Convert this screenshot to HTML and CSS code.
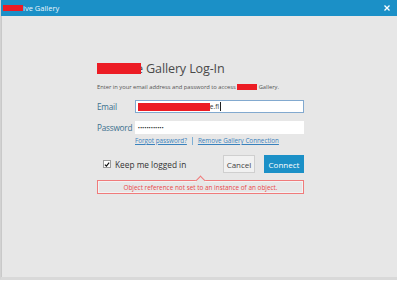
FILE: index.html
```html
<!DOCTYPE html>
<html>
<head>
<meta charset="utf-8">
<link rel="stylesheet" href="styles.css">
</head>
<body>
<div class="window">
  <div class="titlebar">
    <span class="redact title-redact"></span>
    <span class="title-text">ive Gallery</span>
    <svg class="close" width="6" height="6" viewBox="0 0 6 6"><path d="M0.5 0.5 L5.5 5.5 M5.5 0.5 L0.5 5.5" stroke="#fff" stroke-width="1.3"/></svg>
  </div>
  <div class="content">
    <div class="form">
      <h1 class="heading"><span class="redact head-redact"></span><span class="head-text">e Gallery Log-In</span></h1>
      <p class="intro">Enter in your email address and password to access <span class="redact intro-redact"></span> Gallery.</p>
      <div class="row">
        <label class="label">Email</label>
        <div class="input focused"><span class="redact email-redact"></span><span class="email-tail">e.fl</span><span class="caret"></span></div>
      </div>
      <div class="row">
        <label class="label">Password</label>
        <div class="input"><span class="dots">••••••••••••</span></div>
      </div>
      <div class="links">
        <a class="link">Forgot password?</a>
        <span class="sep"></span>
        <a class="link">Remove Gallery Connection</a>
      </div>
      <div class="actions">
        <label class="keep"><span class="checkbox"><svg width="7" height="7" viewBox="0 0 7 7"><path d="M1 3.6 L2.8 5.4 L6 1.4" stroke="#111" stroke-width="1.4" fill="none"/></svg></span>Keep me logged in</label>
        <div class="buttons">
          <button class="btn cancel">Cancel</button>
          <button class="btn connect">Connect</button>
        </div>
      </div>
      <div class="error">
        <span class="notch"></span>
        Object reference not set to an instance of an object.
      </div>
    </div>
  </div>
</div>
</body>
</html>
```
FILE: styles.css
```css
html, body {
  margin: 0;
  padding: 0;
  background: #ffffff;
}
body {
  width: 400px;
  height: 282px;
  font-family: "Open Sans", "Noto Sans", sans-serif;
  overflow: hidden;
}
.window {
  width: 397px;
  height: 280px;
  display: flex;
  flex-direction: column;
  box-sizing: border-box;
  border-left: 1px solid #d2d2d2;
  border-bottom: 3px solid #d9d9d9;
  background: #e7e7e7;
}
.titlebar {
  height: 16px;
  background: #1b90c7;
  display: flex;
  align-items: center;
  padding-left: 2px;
  padding-right: 7px;
  flex-shrink: 0;
}
.redact {
  display: inline-block;
  background: #ec1c24;
}
.title-redact {
  width: 20px;
  height: 6px;
}
.title-text {
  color: #eaf5fb;
  font-size: 7.5px;
  font-weight: 400;
  flex: 1;
}
.close {
  display: block;
}
.content {
  flex: 1;
  border-left: 1px solid #c9c9c9;
}
.form {
  width: 207px;
  margin-left: 95px;
  padding-top: 44px;
}
.heading {
  margin: 0;
  font-size: 12.6px;
  font-weight: 400;
  color: #4a4a4a;
  line-height: 17px;
  display: flex;
  align-items: center;
}
.head-redact {
  width: 44px;
  height: 11px;
  position: relative;
  z-index: 1;
}
.head-text {
  letter-spacing: -0.15px;
  margin-left: -5px;
}
.intro {
  margin: 6px 0 0 0;
  font-size: 5.8px;
  color: #555;
  line-height: 9px;
  letter-spacing: -0.02px;
}
.intro-redact {
  width: 20px;
  height: 6px;
  vertical-align: -1px;
}
.row {
  display: flex;
  align-items: center;
  margin-top: 8px;
}
.row + .row {
  margin-top: 8px;
}
.label {
  width: 38px;
  font-size: 8.2px;
  letter-spacing: -0.2px;
  color: #3a6f8d;
}
.input {
  width: 170px;
  height: 13px;
  box-sizing: border-box;
  background: #fff;
  display: flex;
  align-items: center;
  padding-left: 3px;
  font-size: 7px;
  color: #333;
}
.input.focused {
  border: 1px solid #82a9cf;
  padding-left: 2px;
}
.email-redact {
  width: 72px;
  height: 8px;
}
.email-tail {
  font-size: 6.5px;
}
.caret {
  width: 1px;
  height: 9px;
  background: #222;
  margin-left: 1px;
}
.dots {
  font-size: 6px;
  letter-spacing: -0.1px;
  color: #2a2a2a;
  line-height: 1;
}
.links {
  display: flex;
  align-items: center;
  margin-left: 38px;
  margin-top: 2px;
  font-size: 6.3px;
}
.link {
  color: #3a82bd;
  text-decoration: underline;
}
.sep {
  width: 1px;
  height: 8px;
  background: #7fb0d6;
  margin: 0 5px;
}
.actions {
  display: flex;
  align-items: center;
  justify-content: space-between;
  margin-top: 10px;
}
.keep {
  display: flex;
  align-items: center;
  font-size: 8.3px;
  color: #333;
  margin-left: 6px;
}
.checkbox {
  width: 8px;
  height: 8px;
  background: #fff;
  border: 1px solid #9a9a9a;
  box-sizing: border-box;
  display: flex;
  align-items: center;
  justify-content: center;
  margin-right: 4px;
}
.checkbox svg {
  display: block;
}
.buttons {
  display: flex;
  gap: 9px;
}
.btn {
  height: 18px;
  font-family: inherit;
  font-size: 8px;
  padding: 0;
  margin: 0;
  box-sizing: border-box;
}
.cancel {
  width: 32px;
  background: #f1f1f1;
  border: 1px solid #cfcfcf;
  color: #444;
}
.connect {
  width: 40px;
  background: #1b90c7;
  border: 1px solid #1b90c7;
  color: #fff;
}
.error {
  position: relative;
  margin-top: 7px;
  height: 14px;
  box-sizing: border-box;
  border: 1px solid #f07b7b;
  box-shadow: inset 0 0 0 1px #f3f3f3;
  display: flex;
  align-items: center;
  justify-content: center;
  font-size: 6.4px;
  color: #e9474a;
}
.notch {
  position: absolute;
  top: -4px;
  left: 99px;
  width: 6px;
  height: 6px;
  background: #e7e7e7;
  border-left: 1px solid #f07b7b;
  border-top: 1px solid #f07b7b;
  transform: rotate(45deg);
}
```
